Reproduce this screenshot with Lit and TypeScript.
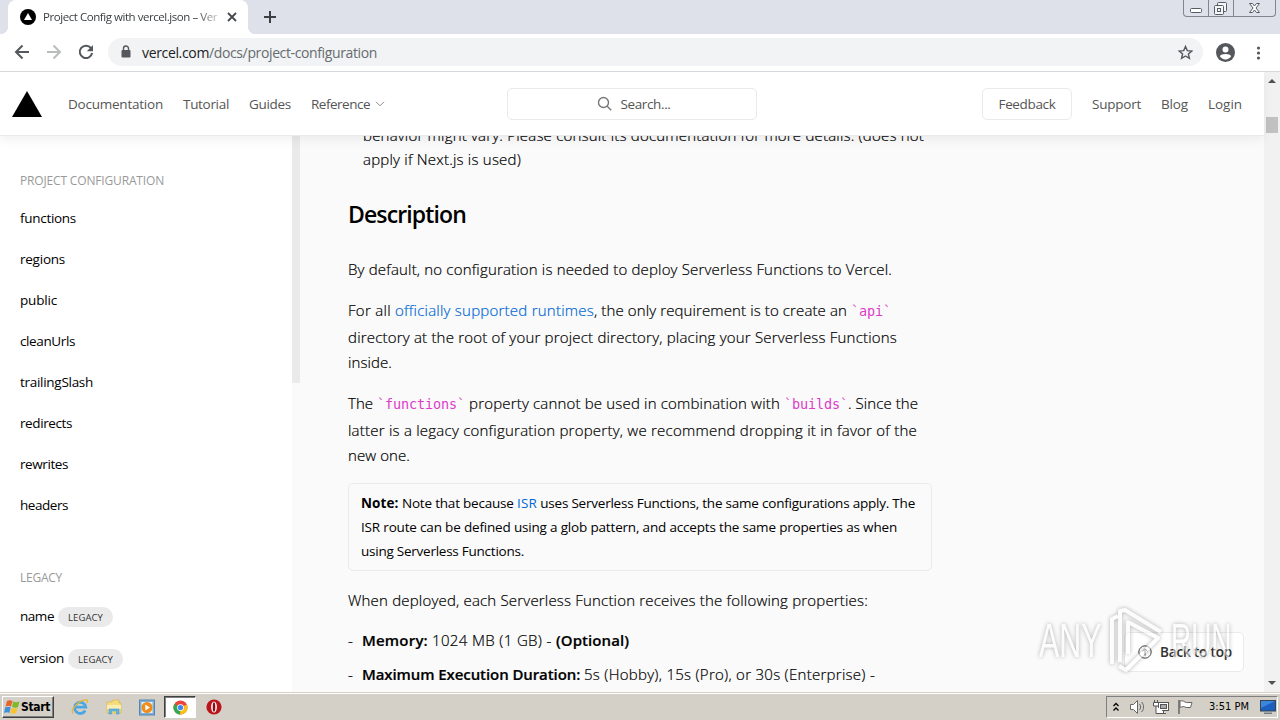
import { LitElement, html, css, svg } from "lit";
import { customElement, property } from "lit/decorators.js";

type Run = { text: string; width: number; kind?: string };

const run = (text: string, width: number, kind = ""): Run => ({
  text,
  width,
  kind,
});

// Spreads its text over a fixed width by adjusting the letter spacing.
@customElement("fit-text")
class FitText extends LitElement {
  static styles = css`
    :host {
      display: inline-block;
      flex: none;
      white-space: pre;
    }
  `;

  @property() text = "";
  @property({ type: Number }) width = 0;

  updated() {
    const span = this.shadowRoot!.querySelector("span")!;
    span.style.letterSpacing = "0";
    const natural = span.getBoundingClientRect().width;
    span.style.letterSpacing = (this.width - natural) / this.text.length + "px";
    this.style.width = this.width + "px";
  }

  render() {
    return html`<span>${this.text}</span>`;
  }
}

const fit = (text: string, width: number, kind = "") =>
  html`<fit-text class="${kind}" .text=${text} .width=${width}></fit-text>`;

const line = (runs: Run[], kind = "") =>
  html`<div class="line ${kind}">
    ${runs.map((r) => fit(r.text, r.width, r.kind))}
  </div>`;

@customElement("browser-bar")
class BrowserBar extends LitElement {
  static styles = css`
    :host {
      display: block;
      font-family: "Open Sans", "Noto Sans", sans-serif;
      color: #3c4043;
    }

    svg {
      display: block;
      flex: none;
    }

    .tabs {
      display: flex;
      align-items: flex-start;
      height: 34px;
      background: #dee1e9;
    }

    .tab {
      display: flex;
      align-items: center;
      position: relative;
      box-sizing: border-box;
      width: 240px;
      height: 34px;
      margin-left: 8px;
      padding-left: 12px;
      border-radius: 8px 8px 0 0;
      background: #fff;
      font-size: 11.5px;
    }

    .tab::before,
    .tab::after {
      content: "";
      position: absolute;
      bottom: 0;
      width: 8px;
      height: 8px;
    }

    .tab::before {
      left: -8px;
      background: radial-gradient(circle at 0 0, transparent 8px, #fff 8.5px);
    }

    .tab::after {
      right: -8px;
      background: radial-gradient(circle at 100% 0, transparent 8px, #fff 8.5px);
    }

    .title {
      width: 175px;
      margin: -2px 9px 0 7px;
      -webkit-mask-image: linear-gradient(90deg, #000 88%, rgba(0, 0, 0, 0.25));
      mask-image: linear-gradient(90deg, #000 88%, rgba(0, 0, 0, 0.25));
    }

    .plus {
      margin: 11px auto 0 16px;
    }

    .window {
      display: flex;
      box-sizing: border-box;
      width: 93px;
      height: 17px;
      margin-right: 4px;
      border: 1px solid #80858f;
      border-top: 0;
      border-radius: 0 0 4px 4px;
    }

    .window svg + svg {
      border-left: 1px solid #80858f;
    }

    .toolbar {
      display: flex;
      align-items: center;
      height: 37px;
      padding-left: 14px;
      background: #fff;
      border-bottom: 1px solid #d5d7da;
    }

    .nav {
      display: flex;
      gap: 16px;
      margin-top: -1px;
    }

    .omnibox {
      display: flex;
      align-items: center;
      box-sizing: border-box;
      width: 1095px;
      height: 28px;
      margin: -1px 13px 0 14px;
      padding: 0 10px 0 10px;
      border-radius: 14px;
      background: #f1f3f4;
      font-size: 14px;
    }

    .lock {
      margin-right: 8px;
    }

    .host {
      color: #202124;
    }

    .path {
      color: #676b70;
    }

    .star {
      margin-left: auto;
    }

    .menu {
      margin-left: 13px;
    }
  `;

  render() {
    return html`
      <div class="tabs">
        <div class="tab">
          <svg width="16" height="16" viewBox="0 0 16 16">
            <circle cx="8" cy="8" r="8" />
            <path d="M8 4l4 7H4z" fill="#fff" />
          </svg>
          <div class="title">
            ${fit("Project Config with vercel.json – Ver", 174)}
          </div>
          <svg width="10" height="10" viewBox="0 0 10 10">
            <path d="M1 1l8 8M9 1l-8 8" stroke="#45494d" stroke-width="1.8" />
          </svg>
        </div>
        <svg class="plus" width="12" height="12" viewBox="0 0 12 12">
          <path d="M6 0v12M0 6h12" stroke="#3c4043" stroke-width="2" />
        </svg>
        <div class="window">
          <svg width="24" height="16" viewBox="0 0 24 16">
            <rect x="6.500" y="8.500" width="11" height="4" rx="1" fill="#fff" stroke="#555c66" />
          </svg>
          <svg width="24" height="16" viewBox="0 0 24 16">
            <g fill="#f4f5f7" stroke="#555c66">
              <rect x="8.500" y="2.500" width="9" height="9" rx="1" />
              <rect x="5.500" y="5.500" width="9" height="9" rx="1" />
              <rect x="8.500" y="8.500" width="3" height="3" />
            </g>
          </svg>
          <svg width="41" height="16" viewBox="0 0 41 16">
            <path
              d="M15.500 3.500h3l2 2.500 2-2.500h3l-3.500 4.500 3.500 4.500h-3l-2-2.500-2 2.500h-3L19 8z"
              fill="#fff"
              stroke="#555c66"
            />
          </svg>
        </div>
      </div>
      <div class="toolbar">
        <div class="nav">
          <svg width="16" height="16" viewBox="0 0 16 16" fill="none" stroke="#54585c" stroke-width="2">
            <path d="M15 8H2M8.500 1.500L2 8l6.500 6.500" />
          </svg>
          <svg width="16" height="16" viewBox="0 0 16 16" fill="none" stroke="#babcbe" stroke-width="2">
            <path d="M1 8h13M7.500 1.500L14 8l-6.500 6.500" />
          </svg>
          <svg width="16" height="16" viewBox="0 0 16 16">
            <path d="M13 4.200A6.200 6.200 0 1 0 14.100 9" fill="none" stroke="#54585c" stroke-width="2" />
            <path d="M15 1v6.200H8.800z" fill="#54585c" />
          </svg>
        </div>
        <div class="omnibox">
          <svg class="lock" width="16" height="14" viewBox="0 0 16 14">
            <rect x="3.500" y="5" width="9" height="7.500" rx="1" fill="#54585c" />
            <path d="M5.500 5.500V3.500a2.500 2.500 0 0 1 5 0v2" fill="none" stroke="#54585c" stroke-width="1.400" />
          </svg>
          ${fit("vercel.com", 67, "host")}${fit(
            "/docs/project-configuration",
            168,
            "path"
          )}
          <svg class="star" width="15" height="15" viewBox="0 0 15 15">
            <path
              d="M7.500 1.500l1.800 4.100 4.500.4-3.400 2.900 1 4.400-3.900-2.300-3.900 2.300 1-4.400L1.200 6l4.500-.4z"
              fill="none"
              stroke="#54585c"
              stroke-width="1.400"
            />
          </svg>
        </div>
        <svg width="19" height="19" viewBox="0 0 19 19">
          <circle cx="9.500" cy="9.500" r="9.500" fill="#54585c" />
          <circle cx="9.500" cy="6.500" r="3" fill="#fff" />
          <path d="M3.800 13.300c1.200-3 10.200-3 11.400 0-1.300 2-3.400 3.200-5.700 3.200s-4.400-1.200-5.700-3.200z" fill="#fff" />
        </svg>
        <svg class="menu" width="20" height="16" viewBox="0 0 20 16" fill="#54585c">
          <circle cx="10.500" cy="3" r="1.600" />
          <circle cx="10.500" cy="8" r="1.600" />
          <circle cx="10.500" cy="13" r="1.600" />
        </svg>
      </div>
    `;
  }
}

@customElement("site-header")
class SiteHeader extends LitElement {
  static styles = css`
    :host {
      display: flex;
      align-items: center;
      position: relative;
      z-index: 1;
      box-sizing: border-box;
      height: 64px;
      padding: 0 22px 0 12px;
      background: #fff;
      border-bottom: 1px solid #eaeaea;
      box-shadow: 0 4px 10px rgba(0, 0, 0, 0.06);
      font-family: "Open Sans", "Noto Sans", sans-serif;
      font-size: 13.5px;
      color: #555;
    }

    svg {
      display: block;
    }

    .left,
    .right {
      display: flex;
      align-items: center;
      gap: 20px;
    }

    .logo {
      margin-right: 6px;
    }

    .reference {
      display: flex;
      align-items: center;
      gap: 5px;
    }

    .search,
    .feedback {
      display: flex;
      align-items: center;
      justify-content: center;
      box-sizing: border-box;
      height: 32px;
      border: 1px solid #eaeaea;
      border-radius: 5px;
    }

    .search {
      gap: 9px;
      width: 250px;
      padding-left: 3px;
    }

    .left {
      width: 495px;
    }

    .right {
      margin-left: auto;
    }

    .feedback {
      width: 90px;
    }
  `;

  render() {
    return html`
      <div class="left">
        <svg class="logo" width="30" height="26" viewBox="0 0 30 26">
          <path d="M15 0l15 26H0z" />
        </svg>
        ${fit("Documentation", 95)} ${fit("Tutorial", 46)} ${fit("Guides", 42)}
        <div class="reference">
          ${fit("Reference", 59)}
          <svg width="10" height="6" viewBox="0 0 10 6">
            <path d="M1 .8l4 4 4-4" fill="none" stroke="#888" />
          </svg>
        </div>
      </div>
      <div class="search">
        <svg width="15" height="15" viewBox="0 0 15 15" fill="none" stroke="#777" stroke-width="1.400">
          <circle cx="6.500" cy="6.500" r="5" />
          <path d="M10.200 10.200l4 4" />
        </svg>
        ${fit("Search...", 50)}
      </div>
      <div class="right">
        <div class="feedback">${fit("Feedback", 57)}</div>
        ${fit("Support", 49)} ${fit("Blog", 27)} ${fit("Login", 34)}
      </div>
    `;
  }
}

const sections = [
  { text: "functions", width: 56 },
  { text: "regions", width: 45 },
  { text: "public", width: 37 },
  { text: "cleanUrls", width: 55 },
  { text: "trailingSlash", width: 73 },
  { text: "redirects", width: 52 },
  { text: "rewrites", width: 48 },
  { text: "headers", width: 48 },
];

const legacy = [
  { text: "name", width: 34 },
  { text: "version", width: 44 },
];

@customElement("docs-sidebar")
class DocsSidebar extends LitElement {
  static styles = css`
    :host {
      display: flex;
      flex: none;
      width: 300px;
      font-family: "Open Sans", "Noto Sans", sans-serif;
      font-size: 13.5px;
      color: #000;
    }

    nav {
      box-sizing: border-box;
      width: 292px;
      padding: 35px 0 0 20px;
      background: #fff;
    }

    .heading {
      height: 20px;
      line-height: 20px;
      margin-bottom: 6px;
      font-size: 12px;
      color: #999;
    }

    .item {
      display: flex;
      align-items: center;
      height: 41px;
    }

    .legacy .heading {
      margin: 43px 0 7px;
    }

    .legacy .item {
      height: 42px;
      gap: 4px;
    }

    .badge {
      display: flex;
      align-items: center;
      justify-content: center;
      width: 55px;
      height: 20px;
      margin-top: 2px;
      border-radius: 10px;
      background: #eaeaea;
      font-size: 9.5px;
      color: #333;
    }

    .scroll {
      width: 8px;
      height: 247px;
      background: #eaeaea;
      border-radius: 0 0 1px 1px;
    }
  `;

  render() {
    return html`
      <nav>
        <div class="heading">${fit("PROJECT CONFIGURATION", 144)}</div>
        ${sections.map(
          (s) => html`<div class="item">${fit(s.text, s.width)}</div>`
        )}
        <div class="legacy">
          <div class="heading">${fit("LEGACY", 42)}</div>
          ${legacy.map(
            (s) => html`<div class="item">
              ${fit(s.text, s.width)}
              <div class="badge">${fit("LEGACY", 35)}</div>
            </div>`
          )}
        </div>
      </nav>
      <div class="scroll"></div>
    `;
  }
}

@customElement("docs-article")
class DocsArticle extends LitElement {
  static styles = css`
    :host {
      display: block;
      flex: none;
      width: 584px;
      margin: -13px 0 0 48px;
      font-family: "Open Sans", "Noto Sans", sans-serif;
      font-size: 15px;
      font-weight: 300;
      -webkit-text-stroke: 0.2px;
      color: #000;
    }

    .line {
      display: flex;
      height: 25px;
      line-height: 24px;
    }

    .line.tall {
      height: 27px;
    }

    .intro {
      padding-left: 15px;
    }

    .intro .line {
      height: 24px;
    }

    h2 {
      margin: 26px 0 26px;
      height: 34px;
      line-height: 34px;
      font-size: 23px;
      font-weight: 600;
      -webkit-text-stroke: 0;
    }

    .para {
      margin-bottom: 16px;
    }

    .link {
      color: #0068d6;
    }

    .code {
      padding-top: 1px;
      font-family: "DejaVu Sans Mono", monospace;
      font-size: 13.5px;
      color: #dd3ccb;
      -webkit-text-stroke: 0;
    }

    .strong {
      font-weight: 700;
    }

    .semi {
      font-weight: 600;
    }

    .note {
      box-sizing: border-box;
      height: 88px;
      margin: -1px 0 17px;
      padding: 7px 12px;
      border: 1px solid #eaeaea;
      border-radius: 5px;
      font-size: 13.5px;
      font-weight: 400;
      -webkit-text-stroke: 0;
    }

    .note .line {
      height: 24px;
    }

    .props .line {
      height: 24px;
      margin-bottom: 10px;
    }

    .last {
      margin-bottom: 15px;
    }
  `;

  render() {
    return html`
      <div class="intro">
        ${line([
          run(
            "behavior might vary. Please consult its documentation for more details. (does not",
            561
          ),
        ])}
        ${line([run("apply if Next.js is used)", 158)])}
      </div>
      <h2>${fit("Description", 118)}</h2>
      <div class="para">
        ${line([
          run(
            "By default, no configuration is needed to deploy Serverless Functions to Vercel.",
            544
          ),
        ])}
      </div>
      <div class="para">
        ${line(
          [
            run("For all ", 47),
            run("officially supported runtimes", 199, "link"),
            run(", the only requirement is to create an ", 257),
            run("`api`", 40, "code"),
          ],
          "tall"
        )}
        ${line([
          run(
            "directory at the root of your project directory, placing your Serverless Functions",
            549
          ),
        ])}
        ${line([run("inside.", 44)])}
      </div>
      <div class="para">
        ${line(
          [
            run("The ", 29),
            run("`functions`", 88, "code"),
            run(" property cannot be used in combination with ", 319),
            run("`builds`", 64, "code"),
            run(". Since the", 70),
          ],
          "tall"
        )}
        ${line([
          run(
            "latter is a legacy configuration property, we recommend dropping it in favor of the",
            569
          ),
        ])}
        ${line([run("new one.", 62)])}
      </div>
      <div class="note">
        ${line([
          run("Note: ", 41, "strong"),
          run("Note that because ", 115),
          run("ISR", 20, "link"),
          run(" uses Serverless Functions, the same configurations apply. The", 378),
        ])}
        ${line([
          run(
            "ISR route can be defined using a glob pattern, and accepts the same properties as when",
            536
          ),
        ])}
        ${line([run("using Serverless Functions.", 163)])}
      </div>
      <div class="last">
        ${line([
          run(
            "When deployed, each Serverless Function receives the following properties:",
            520
          ),
        ])}
      </div>
      <div class="props">
        ${line([
          run("- ", 14),
          run("Memory: ", 70, "semi"),
          run("1024 MB (1 GB) - ", 124),
          run("(Optional)", 73, "semi"),
        ])}
        ${line([
          run("- ", 14),
          run("Maximum Execution Duration: ", 222, "semi"),
          run("5s (Hobby), 15s (Pro), or 30s (Enterprise) -", 291),
        ])}
      </div>
    `;
  }
}

const chromeIcon = svg`
  <circle cx="8" cy="8" r="7.500" fill="#e8453c" />
  <path d="M8 8L1.500 4.250A7.500 7.500 0 0 0 8 15.500z" fill="#34a853" />
  <path d="M8 8l6.800-3.200A7.500 7.500 0 0 1 7.500 15.500z" fill="#fbc116" />
  <circle cx="8" cy="8" r="3.600" fill="#fff" />
  <circle cx="8" cy="8" r="2.800" fill="#4285f4" />
`;

@customElement("task-bar")
class TaskBar extends LitElement {
  static styles = css`
    :host {
      display: flex;
      align-items: center;
      box-sizing: border-box;
      height: 28px;
      padding: 0 2px 0 2px;
      border-top: 1px solid #d4d0c8;
      background: #d4d0c8;
      box-shadow: inset 0 1px #fff;
      font-family: "DejaVu Sans Condensed", "DejaVu Sans", sans-serif;
      font-size: 11px;
      color: #000;
    }

    svg {
      display: block;
      flex: none;
    }

    .start {
      display: flex;
      align-items: center;
      box-sizing: border-box;
      width: 52px;
      height: 22px;
      padding-left: 1px;
      margin-top: 1px;
      border: 1px solid;
      border-color: #fff #404040 #404040 #fff;
      box-shadow: inset -1px -1px #808080;
      font-weight: 700;
      font-size: 12px;
    }

    .apps {
      display: flex;
      align-items: center;
      gap: 16px;
      margin: 1px 0 0 17px;
    }

    .active {
      display: flex;
      align-items: center;
      justify-content: center;
      box-sizing: border-box;
      width: 32px;
      height: 22px;
      margin: 0 -6px 0 -7px;
      border: 1px solid;
      border-color: #404040 #fff #fff #404040;
      box-shadow: inset 1px 1px #808080;
      background: #fff;
    }

    .tray {
      display: flex;
      align-items: center;
      box-sizing: border-box;
      width: 172px;
      height: 22px;
      margin-left: auto;
      padding-left: 5px;
      border: 1px solid;
      border-color: #808080 #fff #fff #808080;
    }

    .sound {
      margin-left: 9px;
    }

    .network,
    .flag {
      margin-left: 7px;
    }

    .clock {
      margin: 0 11px 0 15px;
    }
  `;

  render() {
    return html`
      <div class="start">
        <svg width="17" height="16" viewBox="0 0 17 16">
          <path d="M3 2c2-1 4-1 5.500.2L7 7.500C5.500 6.500 3.500 6.500 1.500 7.500z" fill="#e8622c" />
          <path d="M9.300 2.600c2 1 4 1 6.200 0L14 8c-2 1-4 .8-6-.2z" fill="#7db928" />
          <path d="M1.200 8.500c2-1 4-1 5.500 0L5.300 14C4 13 2 13 0 14z" fill="#3f8fdd" />
          <path d="M7.600 8.800c2 1 4 1 6.100 0L12 14c-2 1-4 .8-5.800-.2z" fill="#f7c430" />
        </svg>
        ${fit("Start", 29)}
      </div>
      <div class="apps">
        <svg width="18" height="18" viewBox="0 0 18 18" fill="none">
          <path d="M14.200 12.500A5.600 5.600 0 1 1 14.800 9.200H5" stroke="#4ba6e4" stroke-width="2.800" />
          <path d="M2 15.500C-1 11 9 1.500 15.500 2c1.500.3 1.400 1.700.5 3" stroke="#e9b62f" stroke-width="1.300" />
        </svg>
        <svg width="18" height="18" viewBox="0 0 18 18">
          <path d="M2 4h5l1-2h6v3h2v10H2z" fill="#f5dc7c" stroke="#d7b54a" stroke-width=".7" />
          <path d="M2 7h14v4H2z" fill="#fbeeb0" />
          <path d="M4 16v-5h10v5h-2.500v-3h-5v3z" fill="#62b7e6" stroke="#4796c8" stroke-width=".6" />
        </svg>
        <svg width="16" height="17" viewBox="0 0 16 17">
          <rect x=".5" y="1" width="15" height="15" fill="#7faed6" stroke="#5486b4" />
          <rect x="2.500" y="3" width="11" height="11" fill="#e6f0f8" />
          <circle cx="8" cy="8.500" r="5.500" fill="#f08c1a" />
          <path d="M6.300 5.500l4.700 3-4.700 3z" fill="#fff" />
        </svg>
        <div class="active">
          <svg width="15" height="15" viewBox="0 0 16 16">${chromeIcon}</svg>
        </div>
        <svg width="16" height="16" viewBox="0 0 16 16">
          <circle cx="8" cy="8" r="7.600" fill="#b9151b" />
          <ellipse cx="8" cy="8" rx="2.900" ry="5.600" fill="#fff" />
          <ellipse cx="8" cy="8" rx="1.300" ry="4.800" fill="#8d0d12" />
        </svg>
      </div>
      <div class="tray">
        <svg width="8" height="10" viewBox="0 0 8 10" fill="none" stroke="#000" stroke-width="1.300">
          <path d="M1.500 4L4 1.500 6.500 4M1.500 8.500L4 6l2.500 2.500" />
        </svg>
        <svg class="sound" width="17" height="16" viewBox="0 0 17 16" fill="none" stroke="#666">
          <path d="M1.500 5.500h3l4-4v13l-4-4h-3z" fill="#fff" />
          <path d="M10.500 5c1.500 1.500 1.500 4.500 0 6M12.500 3c2.800 2.500 2.800 7.500 0 10" />
        </svg>
        <svg class="network" width="17" height="16" viewBox="0 0 17 16" fill="#fff" stroke="#555">
          <rect x="5.500" y="3.500" width="10" height="8" />
          <rect x="7.500" y="5.500" width="6" height="4" fill="#aaa" />
          <path d="M.5 3.500h5v3.500h-5zM1.500 1v2.500M4.500 1v2.500M3 7v7.500h10M10.500 12v2.500" />
        </svg>
        <svg class="flag" width="17" height="16" viewBox="0 0 17 16" fill="#fff" stroke="#666">
          <path d="M2 1v14" stroke-width="1.500" />
          <path d="M3 2c3-1 4 1 6.500 1.500H15l-1.500 5H9C7 7 5.500 7.500 3 8.500z" />
        </svg>
        <div class="clock">${fit("3:51 PM", 40)}</div>
        <svg width="17" height="14" viewBox="0 0 17 14">
          <rect x=".5" y=".5" width="15" height="10.500" fill="#1c5fbd" stroke="#345" />
          <path d="M1 1h14L1 8z" fill="#3c86dd" />
          <path d="M4 13.200h8" stroke="#456" />
        </svg>
      </div>
    `;
  }
}

@customElement("app-root")
class AppRoot extends LitElement {
  static styles = css`
    :host {
      display: flex;
      flex-direction: column;
      position: relative;
      width: 1280px;
      height: 720px;
      overflow: hidden;
      background: #fafafa;
      font-family: "Open Sans", "Noto Sans", sans-serif;
    }

    .view {
      display: flex;
      height: 620px;
      overflow: hidden;
    }

    .page {
      width: 1264px;
    }

    .body {
      display: flex;
      height: 556px;
    }

    .scrollbar {
      display: flex;
      flex-direction: column;
      align-items: center;
      box-sizing: border-box;
      width: 16px;
      padding: 7px 0 7px;
      background: #f1f1f1;
    }

    .thumb {
      width: 12px;
      height: 16px;
      margin: 34px 0 auto;
      background: #c1c1c1;
    }

    .top {
      position: absolute;
      top: 632px;
      left: 1124px;
      display: flex;
      align-items: center;
      gap: 8px;
      box-sizing: border-box;
      width: 120px;
      height: 40px;
      padding-left: 13px;
      border: 1px solid #eaeaea;
      border-radius: 5px;
      background: #fff;
      font-size: 13.5px;
      font-weight: 600;
      color: #333;
    }

    .watermark {
      position: absolute;
      top: 606px;
      left: 1039px;
      display: flex;
      align-items: center;
      height: 68px;
      font-family: "Liberation Sans", Arial, sans-serif;
      font-size: 49px;
      color: #fff;
      opacity: 0.5;
      filter: drop-shadow(0 0 2px rgba(0, 0, 0, 0.6));
    }

    .word {
      width: 64px;
      transform: scaleX(0.62);
      transform-origin: left;
    }

    .word.narrow {
      transform: scaleX(0.57);
    }

    .mark {
      margin: 0 6px 0 4px;
    }
  `;

  render() {
    return html`
      <browser-bar></browser-bar>
      <div class="view">
        <div class="page">
          <site-header></site-header>
          <div class="body">
            <docs-sidebar></docs-sidebar>
            <docs-article></docs-article>
          </div>
        </div>
        <div class="scrollbar">
          <svg width="8" height="4"><path d="M4 0l4 4H0z" fill="#505050" /></svg>
          <div class="thumb"></div>
          <svg width="8" height="4"><path d="M4 4l4-4H0z" fill="#505050" /></svg>
        </div>
      </div>
      <task-bar></task-bar>
      <div class="top">
        <svg width="14" height="14" viewBox="0 0 14 14" fill="none" stroke="#444">
          <circle cx="7" cy="7" r="6.200" />
          <path d="M7 10.500V4M4.500 6.200L7 3.800l2.500 2.400" />
        </svg>
        ${fit("Back to top", 72)}
      </div>
      <div class="watermark">
        <div class="word">ANY</div>
        <svg class="mark" width="58" height="68" viewBox="0 0 58 68">
          <g fill="none" stroke="#fff" stroke-width="4" stroke-linejoin="round">
            <path d="M5 58V13l6-3M13 56V5l5-1 36 22" />
            <path d="M21 48V16l30 16-32 32-7-4" />
          </g>
        </svg>
        <div class="word narrow">RUN</div>
      </div>
    `;
  }
}

export { AppRoot };
